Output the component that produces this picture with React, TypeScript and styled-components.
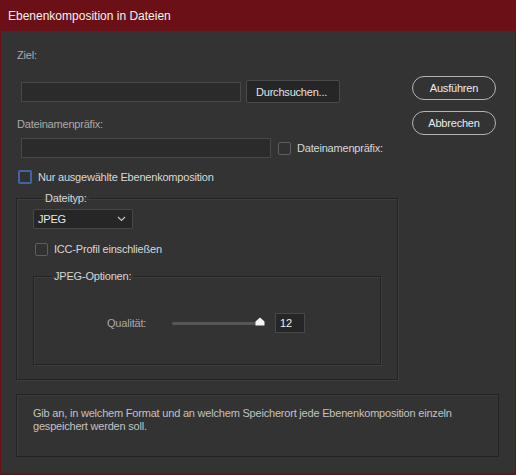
import styled, { createGlobalStyle } from 'styled-components';

const GlobalStyle = createGlobalStyle`
  html, body {
    margin: 0;
    padding: 0;
    background: #333333;
  }
  body {
    font-family: "Liberation Sans", Arial, sans-serif;
    font-size: 11px;
    letter-spacing: -0.2px;
  }
`;

const Window = styled.div`
  width: 516px;
  height: 475px;
  box-sizing: border-box;
  background: #333333;
  border: 1px solid #6a1016;
  border-top: none;
  border-bottom-width: 2px;
  display: flex;
  flex-direction: column;
`;

const TitleBar = styled.div`
  height: 31px;
  flex-shrink: 0;
  background: #6a1016;
  color: #f2f2f2;
  font-size: 12px;
  letter-spacing: 0;
  display: flex;
  align-items: center;
  padding-left: 8px;
  margin: 0 -1px;
`;

const Body = styled.div`
  padding: 17px 16px 0 14px;
  display: flex;
  flex-direction: column;
`;

const TopArea = styled.div`
  display: flex;
`;

const FormColumn = styled.div`
  flex: 1;
  display: flex;
  flex-direction: column;
`;

const ButtonColumn = styled.div`
  width: 84px;
  margin-right: 3px;
  padding-top: 28px;
  display: flex;
  flex-direction: column;
  gap: 11px;
`;

const Label = styled.div<{ $top?: number }>`
  color: #ababab;
  line-height: 14px;
  margin-top: ${p => p.$top ?? 0}px;
  padding-left: 2px;
`;

const Row = styled.div<{ $top?: number }>`
  display: flex;
  align-items: center;
  gap: 5px;
  margin-top: ${p => p.$top ?? 0}px;
  padding-left: 6px;
`;

const TextInput = styled.div<{ $width: number }>`
  width: ${p => p.$width}px;
  height: 20px;
  box-sizing: border-box;
  background: #2b2b2b;
  border: 1px solid #484848;
`;

const FlatButton = styled.div`
  width: 94px;
  height: 23px;
  box-sizing: border-box;
  padding: 0 9px;
  display: flex;
  align-items: center;
  background: #262626;
  border: 1px solid #4a4a4a;
  border-radius: 2px;
  color: #e4e4e4;
`;

const PillButton = styled.div`
  height: 24px;
  box-sizing: border-box;
  border: 1px solid #b3b3b3;
  border-radius: 12px;
  display: flex;
  align-items: center;
  justify-content: center;
  color: #ececec;
`;

const CheckRow = styled.label<{ $top?: number; $left?: number }>`
  display: flex;
  align-items: center;
  gap: 6px;
  margin-top: ${p => p.$top ?? 0}px;
  margin-left: ${p => p.$left ?? 0}px;
  color: #d8d8d8;
  line-height: 14px;
`;

const Box = styled.span<{ $focus?: boolean }>`
  width: ${p => (p.$focus ? 14 : 13)}px;
  height: ${p => (p.$focus ? 14 : 13)}px;
  box-sizing: border-box;
  border: ${p => (p.$focus ? '2px solid #3f66a3' : '1px solid #5e5e5e')};
  border-radius: 2px;
  background: #313131;
  flex-shrink: 0;
`;

const Group = styled.fieldset<{ $width: number }>`
  width: ${p => p.$width}px;
  box-sizing: border-box;
  margin: 0;
  border: 1px solid #232323;
  box-shadow: 1px 1px 0 #3e3e3e, inset 1px 1px 0 #3e3e3e;
  display: flex;
  flex-direction: column;
  align-items: flex-start;
`;

const OuterGroup = styled(Group)`
  margin-top: 7px;
  margin-left: 1px;
  padding: 4px 16px 12px 17px;
  height: 189px;
`;

const InnerGroup = styled(Group)`
  margin-top: 13px;
  margin-left: -1px;
  padding: 30px 0 0 0;
  height: 96px;
`;

const Legend = styled.legend<{ $left: number }>`
  margin-left: ${p => p.$left}px;
  padding: 0 2px;
  color: #d6d6d6;
  line-height: 14px;
`;

const Select = styled.div`
  width: 100px;
  height: 20px;
  box-sizing: border-box;
  margin-left: -1px;
  background: #262626;
  border: 1px solid #474747;
  border-radius: 2px;
  display: flex;
  align-items: center;
  justify-content: space-between;
  padding: 0 6px 0 4px;
  color: #e8e8e8;
`;

const SliderRow = styled.div`
  display: flex;
  align-items: center;
  padding-left: 73px;
`;

const SliderLabel = styled.span`
  color: #a8a8a8;
  width: 65px;
`;

const Track = styled.div`
  position: relative;
  width: 88px;
  height: 3px;
  background: #565656;
  border-radius: 2px;
`;

const Thumb = styled.svg`
  position: absolute;
  right: -5px;
  top: -5px;
`;

const NumberBox = styled.div`
  margin-left: 15px;
  width: 30px;
  height: 20px;
  box-sizing: border-box;
  background: #262626;
  border: 1px solid #474747;
  color: #f0f0f0;
  padding: 2px 0 0 4px;
  line-height: 14px;
`;

const Description = styled.div`
  margin-top: 14px;
  margin-left: 1px;
  width: 483px;
  height: 63px;
  box-sizing: border-box;
  border: 1px solid #232323;
  box-shadow: inset 1px 1px 0 #3a3a3a;
  padding: 12px 16px 0 16px;
  color: #c2c2c2;
  line-height: 13px;
`;

export default function App() {
  return (
    <>
      <GlobalStyle />
      <Window>
        <TitleBar>Ebenenkomposition in Dateien</TitleBar>
        <Body>
          <TopArea>
            <FormColumn>
              <Label>Ziel:</Label>
              <Row $top={18}>
                <TextInput $width={220} />
                <FlatButton>Durchsuchen...</FlatButton>
              </Row>
              <Label $top={14}>Dateinamenpräfix:</Label>
              <Row $top={7}>
                <TextInput $width={250} />
                <CheckRow $left={2}>
                  <Box />
                  Dateinamenpräfix:
                </CheckRow>
              </Row>
              <CheckRow $top={12} $left={3}>
                <Box $focus />
                Nur ausgewählte Ebenenkomposition
              </CheckRow>
            </FormColumn>
            <ButtonColumn>
              <PillButton>Ausführen</PillButton>
              <PillButton>Abbrechen</PillButton>
            </ButtonColumn>
          </TopArea>

          <OuterGroup $width={382}>
            <Legend $left={9}>Dateityp:</Legend>
            <Select>
              JPEG
              <svg width="9" height="6" viewBox="0 0 9 6">
                <path d="M1 1 L4.5 4.5 L8 1" fill="none" stroke="#c8c8c8" strokeWidth="1.1" />
              </svg>
            </Select>
            <CheckRow $top={13} $left={1}>
              <Box />
              ICC-Profil einschließen
            </CheckRow>
            <InnerGroup $width={348}>
              <Legend $left={18}>JPEG-Optionen:</Legend>
              <SliderRow>
                <SliderLabel>Qualität:</SliderLabel>
                <Track>
                  <Thumb width="10" height="9" viewBox="0 0 10 9">
                    <path d="M5 0.5 L9.5 4.5 V8.5 H0.5 V4.5 Z" fill="#f4f4f4" />
                  </Thumb>
                </Track>
                <NumberBox>12</NumberBox>
              </SliderRow>
            </InnerGroup>
          </OuterGroup>

          <Description>
            Gib an, in welchem Format und an welchem Speicherort jede Ebenenkomposition einzeln
            gespeichert werden soll.
          </Description>
        </Body>
      </Window>
    </>
  );
}
